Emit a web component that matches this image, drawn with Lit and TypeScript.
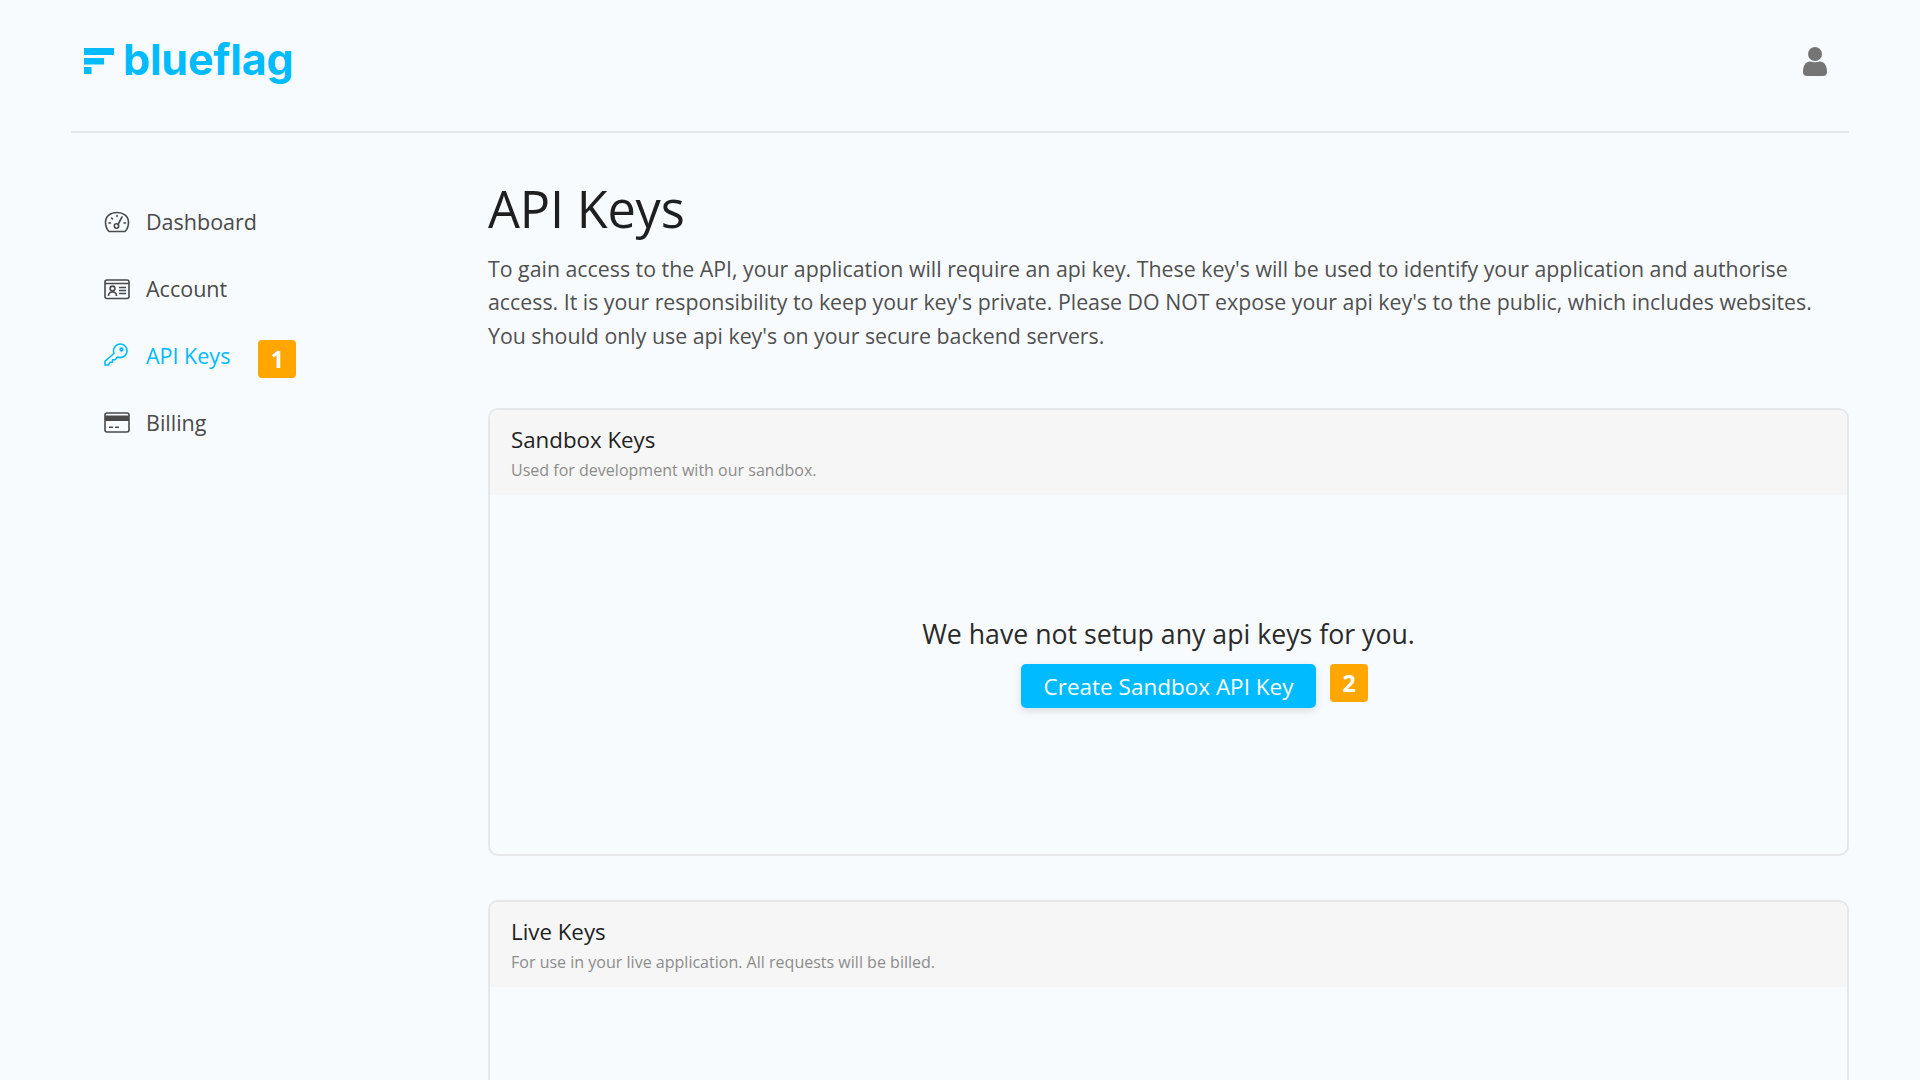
import { LitElement, html, css } from "lit";
import { customElement } from "lit/decorators.js";

@customElement("app-root")
export class AppRoot extends LitElement {
  static styles = css`
    :host { display: block; height: 1080px; overflow: hidden; background: #f7fbfe; font-family: "Open Sans", sans-serif; color: #1f1f1f; }
    .page { padding: 0 71px; }
    .top { height: 133px; box-sizing: border-box; border-bottom: 2px solid #e4e6e8; display: flex; align-items: center; justify-content: space-between; padding: 0 22px 9px 13px; }
    .logo { display: flex; align-items: center; gap: 9px; color: #00bbff; font-family: "Inter", sans-serif; font-weight: 700; font-size: 43px; letter-spacing: -0.2px; line-height: 1; }
    .logo svg { display: block; }
    .logo span { position: relative; top: -2px; }
    .user { display: block; }
    .body { display: flex; }
    .side { width: 417px; flex: none; padding: 55.500px 0 0 33px; box-sizing: border-box; }
    .item { height: 66.800px; display: flex; align-items: center; gap: 16px; font-size: 21.500px; color: #4a4a4a; }
    .item svg { width: 26px; height: 26px; flex: none; }
    .item svg.key { margin-left: -1px; margin-right: 1px; }
    .item.active { color: #00bbff; }
    .badge { width: 38px; height: 38px; border-radius: 4px; background: #ffa600; color: #fff; font-weight: 700; font-size: 23px; display: flex; align-items: center; justify-content: center; flex: none; }
    .item .badge { margin: 7px 0 0 12px; }
    main { flex: 1; min-width: 0; }
    h1 { font-size: 50.500px; font-weight: 400; margin: 0; padding-top: 43px; line-height: 66px; color: #1f1f1f; letter-spacing: -0.2px; }
    .lead { margin: 0 0 56px; font-size: 21.320px; line-height: 33.400px; color: #505050; padding-top: 10px; }
    .card { border: 2px solid #e6e7e8; border-radius: 10px; overflow: hidden; margin-bottom: 44px; }
    .head { background: #f6f6f6; height: 85px; box-sizing: border-box; padding: 15px 21px; }
    .head h2 { margin: 0; font-size: 22.300px; font-weight: 500; line-height: 30px; color: #1f1f1f; }
    .head p { margin: 0; padding-top: 1px; font-size: 16.050px; line-height: 29px; color: #8c8c8c; }
    .empty { height: 359px; display: flex; flex-direction: column; align-items: center; padding-top: 120px; box-sizing: border-box; }
    .empty p { margin: 0; font-size: 26.700px; line-height: 38px; color: #2a2a2a; }
    .actions { position: relative; margin-top: 11px; }
    button { display: block; width: 295px; height: 44px; border: 0; border-radius: 5px; background: #00bbff; color: #fff; font: 400 22.500px "Open Sans", sans-serif; box-shadow: 0 3px 8px rgba(0,0,0,.12); padding: 0; }
    .actions .badge { position: absolute; left: 309px; top: 0; }
  `;

  render() {
    return html`<div class="page">
      <header class="top">
        <div class="logo">
          <svg width="30" height="26" viewBox="0 0 30 26"><path fill="#00bbff" d="M0 0h30v7H0zM0 10h20v6.500H0zM0 19h7.500v7H0z"/></svg>
          <span>blueflag</span>
        </div>
        <svg class="user" width="24" height="29" viewBox="0 0 24 29"><circle cx="12" cy="7" r="7" fill="#757575"/><path fill="#757575" d="M0 25c0-6 2-10 7-10.500 3 1 7 1 10 0 5 .5 7 4.500 7 10.500 0 2.500-1.500 4-4 4H4c-2.500 0-4-1.500-4-4z"/></svg>
      </header>
      <div class="body">
        <nav class="side">
          <div class="item">
            <svg viewBox="0 0 26 26" fill="none" stroke="#4a4a4a" stroke-width="1.600" stroke-linecap="round"><path d="M5 22.500h16c2-2 3.500-5 3.500-9C24.500 7 19.500 3.500 13 3.500S1.500 7 1.500 13.500c0 4 1.500 7 3.500 9z"/><circle cx="12.500" cy="17" r="2.200"/><path d="M14 15.500l4-7.500M5 14h1.500M7.500 9l1 1M13 6.500v1M20 14h1.500"/></svg>
            Dashboard
          </div>
          <div class="item">
            <svg viewBox="0 0 26 26" fill="none" stroke="#4a4a4a" stroke-width="1.600"><rect x="1" y="4" width="24" height="18.500" rx="2"/><path d="M1 7.500h24" stroke-width="1.500"/><circle cx="8.500" cy="12.500" r="2.400"/><path d="M4.500 20c0-3 1.500-4 4-4s4 1 4 4M15 11.500h7M15 14.500h7M15 17.500h7"/></svg>
            Account
          </div>
          <div class="item active">
            <svg class="key" viewBox="0 0 26 26" fill="none" stroke="#00bbff" stroke-width="1.600" stroke-linejoin="round"><path d="M10.500 9c0-4 3-7 6.800-7S24 5 24 8.800s-3 6.800-7 6.800c-1 0-1.800-.2-2.500-.5l-2.500 2.600H9.500v2.500H7l-1.500 2.800H2v-3.800l9-7.700c-.4-.8-.5-1.600-.5-2.500z"/><circle cx="18.500" cy="7.500" r="1.400"/></svg>
            API Keys
            <span class="badge">1</span>
          </div>
          <div class="item">
            <svg viewBox="0 0 26 26"><rect x="1" y="4" width="24" height="19" rx="2" fill="none" stroke="#4a4a4a" stroke-width="1.600"/><path fill="#4a4a4a" d="M1 6.500h24v5.500H1zM5 17.500h4v1.600H5zM11 17.500h4v1.600h-4z"/></svg>
            Billing
          </div>
        </nav>
        <main>
          <h1>API Keys</h1>
          <p class="lead">To gain access to the API, your application will require an api key. These key's will be used to identify your application and authorise access. It is your responsibility to keep your key's private. Please DO NOT expose your api key's to the public, which includes websites. You should only use api key's on your secure backend servers.</p>
          <section class="card">
            <div class="head"><h2>Sandbox Keys</h2><p>Used for development with our sandbox.</p></div>
            <div class="empty">
              <p>We have not setup any api keys for you.</p>
              <div class="actions"><button>Create Sandbox API Key</button><span class="badge">2</span></div>
            </div>
          </section>
          <section class="card">
            <div class="head"><h2>Live Keys</h2><p>For use in your live application. All requests will be billed.</p></div>
            <div class="empty"></div>
          </section>
        </main>
      </div>
    </div>`;
  }
}
